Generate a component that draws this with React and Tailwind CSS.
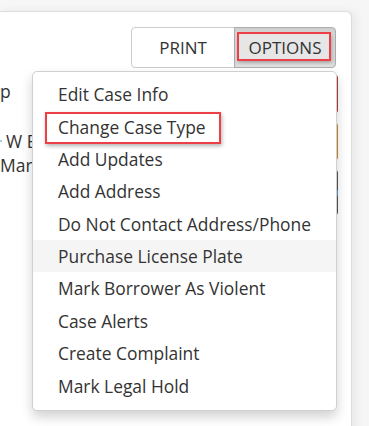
import React from "react";

const items = [
  "Edit Case Info",
  "Change Case Type",
  "Add Updates",
  "Add Address",
  "Do Not Contact Address/Phone",
  "Purchase License Plate",
  "Mark Borrower As Violent",
  "Case Alerts",
  "Create Complaint",
  "Mark Legal Hold",
];

export default function App() {
  return (
    <div
      className="relative w-[369px] h-[426px] overflow-hidden bg-[#f6f6f6] pt-[11px]"
      style={{ fontFamily: '"Open Sans", "Noto Sans", sans-serif' }}
    >
      <div className="w-[352px] h-[430px] bg-white border-t border-r border-[#dcdcdc] rounded-tr-[6px] shadow-[4px_0_10px_rgba(0,0,0,0.06)] text-[#333]">
        <div className="flex justify-end pt-[15px] pr-[15px]">
          <button className="w-[104px] h-[41px] bg-white border border-[#cccccc] rounded-l-[4px] text-[17px] leading-[22px] text-[#333]">
            PRINT
          </button>
          <button className="w-[102px] h-[41px] -ml-px bg-[#e6e6e6] border border-[#adadad] rounded-r-[4px] text-[17px] leading-[22px] text-[#333] shadow-[inset_0_3px_5px_rgba(0,0,0,0.125)]">
            OPTIONS
          </button>
        </div>
        <div className="flex justify-between pr-[13px] pt-[7px]">
          <div className="flex flex-col text-[17.5px] leading-[24px] text-[#333]">
            <div className="mt-[4px]">p</div>
            <div className="mt-[26px] flex items-center">
              <span className="w-[2px] h-[2px] rounded-full bg-[#7cc4ea] mr-[4px]"></span>
              <span>W E</span>
            </div>
            <div>Mar</div>
          </div>
          <div className="flex flex-col gap-[10px]">
            <div className="w-[60px] h-[38px] bg-[#b8393a] rounded-[3px]"></div>
            <div className="w-[60px] h-[37px] bg-[#c98a2e] rounded-[3px]"></div>
            <div className="w-[60px] h-[45px] bg-[#555] rounded-[3px] flex flex-col justify-center">
              <div className="h-[6px] bg-[#5a8fbf]"></div>
            </div>
          </div>
        </div>
      </div>

      {/* Highlight around OPTIONS */}
      <div className="absolute left-[237px] top-[32px] w-[94px] h-[29px] border-[2.5px] border-[#ec3f46] shadow-[1px_2px_4px_rgba(0,0,0,0.3)]"></div>

      {/* Dropdown menu */}
      <div className="absolute left-[32px] top-[71px] w-[305px] h-[340px] bg-white border border-[#d0d0d0] rounded-[5px] shadow-[0_6px_12px_rgba(0,0,0,0.18)] pt-[6px]">
        {items.map((t) => (
          <div
            key={t}
            className={
              "h-[32.4px] flex items-center pl-[25px] text-[17.4px] text-[#333] whitespace-nowrap " +
              (t === "Purchase License Plate" ? "bg-[#f5f5f5]" : "")
            }
          >
            {t}
          </div>
        ))}
        <div className="absolute left-[12px] top-[40px] w-[176px] h-[32px] border-[2.5px] border-[#ec3f46] shadow-[1px_2px_4px_rgba(0,0,0,0.3)]"></div>
      </div>
    </div>
  );
}
